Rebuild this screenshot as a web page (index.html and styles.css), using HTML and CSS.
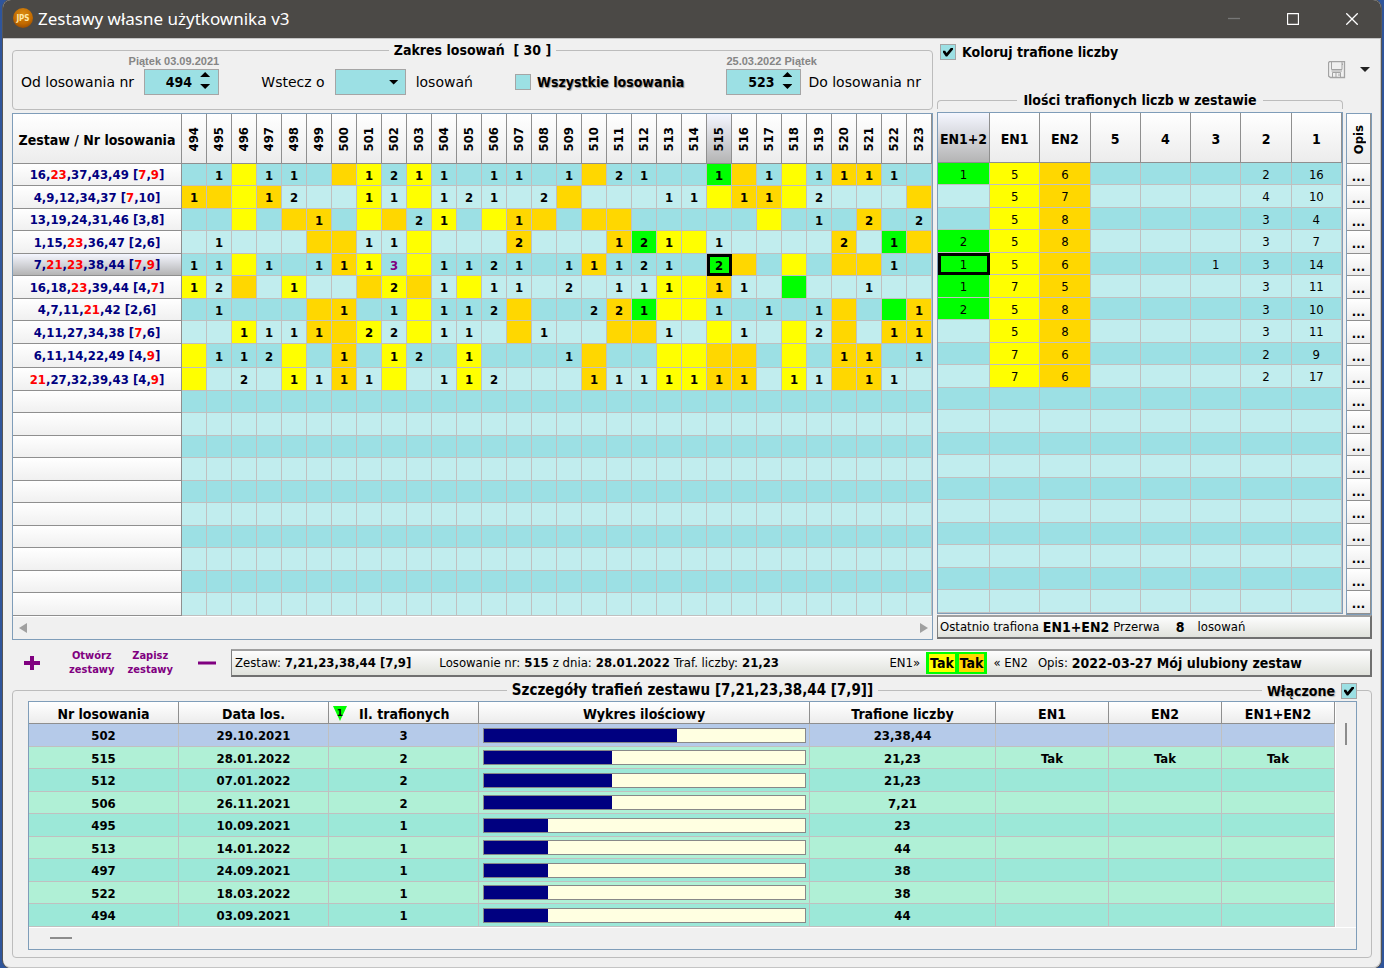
FILE: index.html
```html
<!DOCTYPE html>
<html lang="pl">
<head>
<meta charset="utf-8">
<title>Zestawy własne użytkownika v3</title>
<link rel="stylesheet" href="styles.css">
</head>
<body>
<div class="window">
  <header class="titlebar">
    <svg class="app-icon" viewBox="0 0 20 20" aria-hidden="true">
      <defs><radialGradient id="orb" cx="0.5" cy="0.3" r="0.8"><stop offset="0" stop-color="#d98a10"/><stop offset="0.6" stop-color="#c26a00"/><stop offset="1" stop-color="#8a4200"/></radialGradient></defs>
      <circle cx="10" cy="10" r="10" fill="url(#orb)"/>
      <text x="10" y="13" text-anchor="middle" class="app-icon-text">JPS</text>
    </svg>
    <h1 class="title">Zestawy własne użytkownika v3</h1>
    <div class="window-buttons">
      <button type="button" class="wbtn dim" aria-label="Minimalizuj"><svg width="12" height="12" viewBox="0 0 12 12"><path d="M0 5.5H12"/></svg></button>
      <button type="button" class="wbtn" aria-label="Maksymalizuj"><svg width="12" height="12" viewBox="0 0 12 12"><rect x="0.5" y="0.5" width="11" height="11" rx="0.5"/></svg></button>
      <button type="button" class="wbtn" aria-label="Zamknij"><svg width="12" height="12" viewBox="0 0 12 12"><path d="M0.3 0.3L11.7 11.7M11.7 0.3L0.3 11.7"/></svg></button>
    </div>
  </header>

  <main class="content">
    <div class="upper">
      <section class="left">
        <fieldset class="group range">
          <legend>Zakres losowań &nbsp;[ 30 ]</legend>
          <div class="range-row">
            <div class="field">
              <label class="wide-label" for="from">Od losowania nr</label>
              <div class="dated end">
                <span class="date">Piątek 03.09.2021</span>
                <div class="spin"><input id="from" type="text" value="494"><div class="arrows"><button type="button" class="up" aria-label="Więcej"></button><button type="button" class="down" aria-label="Mniej"></button></div></div>
              </div>
            </div>
            <div class="field">
              <label class="wide-label" for="back">Wstecz o</label>
              <div class="select"><select id="back"><option></option></select></div>
              <span class="wide-label">losowań</span>
            </div>
            <div class="field tick">
              <input type="checkbox" id="all"><label class="shadow" for="all">Wszystkie losowania</label>
            </div>
            <div class="field tight">
              <div class="dated">
                <span class="date">25.03.2022 Piątek</span>
                <div class="spin"><input id="to" type="text" value="523"><div class="arrows"><button type="button" class="up" aria-label="Więcej"></button><button type="button" class="down" aria-label="Mniej"></button></div></div>
              </div>
              <label class="wide-label" for="to">Do losowania nr</label>
            </div>
          </div>
        </fieldset>
        <div class="panel">
          <table class="grid draws">
            <thead><tr id="draws-head"><th class="first">Zestaw / Nr losowania</th></tr></thead>
            <tbody id="draws-body"></tbody>
          </table>
          <div class="hscroll"><button type="button" class="prev" aria-label="W lewo"></button><button type="button" class="next" aria-label="W prawo"></button></div>
        </div>
      </section>

      <section class="right">
        <div class="options">
          <div class="field tick colour"><input type="checkbox" id="colour" checked><label for="colour">Koloruj trafione liczby</label></div>
          <div class="save">
            <button type="button" class="plain" aria-label="Zapisz plik"><svg width="18" height="18" viewBox="0 0 18 18" fill="none" stroke="#a3a3a3"><path d="M1.500.5H16.5V16.500H2.500L.5 15V2Z" stroke-width="1.300"/><path d="M3.500.5V8.500H14V.5M3.500 10H14M4.500 16.500V11.500H12.500V16.500M8 12V16M11 12.500V15M14.500 2.500V4"/></svg></button>
            <button type="button" class="plain" aria-label="Więcej opcji"><svg width="10" height="5" viewBox="0 0 10 5"><path d="M0 0H10L5 5Z" fill="#222"/></svg></button>
          </div>
        </div>
        <div class="caption"><span>Ilości trafionych liczb w zestawie</span></div>
        <div class="stats">
          <div class="panel">
            <table class="grid counts">
              <thead><tr><th class="first chosen">EN1+2</th><th>EN1</th><th>EN2</th><th>5</th><th>4</th><th>3</th><th>2</th><th>1</th></tr></thead>
              <tbody id="counts-body"></tbody>
            </table>
          </div>
          <table class="grid notes">
            <thead><tr><th><span class="turn">Opis</span></th></tr></thead>
            <tbody id="notes-body"></tbody>
          </table>
        </div>
        <div class="status last"><span>Ostatnio trafiona</span><b>EN1+EN2</b><span>Przerwa</span><b class="gap-count">8</b><span>losowań</span></div>
      </section>
    </div>

    <div class="toolbar">
      <div class="actions">
        <button type="button" class="plain" aria-label="Dodaj"><svg width="16" height="16" viewBox="0 0 16 16"><path d="M0 8H16M8 1V15" stroke="#800080" stroke-width="4"/></svg></button>
        <button type="button" class="plain word">Otwórz<br>zestawy</button>
        <button type="button" class="plain word">Zapisz<br>zestawy</button>
        <button type="button" class="plain" aria-label="Usuń"><svg width="18" height="16" viewBox="0 0 18 16"><path d="M0 8H18" stroke="#800080" stroke-width="3"/></svg></button>
      </div>
      <div class="status info">
        <div class="pair set"><span>Zestaw:</span><b class="num">7,21,23,38,44 [7,9]</b></div>
        <div class="pair"><span>Losowanie nr:</span><b class="num">515</b></div>
        <div class="pair"><span>z dnia:</span><b class="num">28.01.2022</b></div>
        <div class="pair hits"><span>Traf. liczby:</span><b class="num">21,23</b></div>
        <div class="pair en"><span>EN1»</span><span class="taks"><b class="y">Tak</b><b class="o">Tak</b></span><span>« EN2</span></div>
        <div class="pair"><span>Opis:</span><b>2022-03-27 Mój ulubiony zestaw</b></div>
      </div>
    </div>

    <fieldset class="group details">
      <legend>Szczegóły trafień zestawu [7,21,23,38,44 [7,9]]</legend>
      <div class="enabled"><label for="on">Włączone</label><input type="checkbox" id="on" checked></div>
      <div class="panel detail-panel">
        <div class="detail-main">
          <table class="grid hits-table">
            <colgroup><col class="c150"><col class="c150"><col class="c150"><col><col class="c186"><col class="c113"><col class="c113"><col class="c113"></colgroup>
            <thead><tr><th>Nr losowania</th><th>Data los.</th><th><div class="sorted"><svg width="14" height="15" viewBox="0 0 14 15" aria-hidden="true"><path d="M0 0H14L7 15Z" fill="#0f0"/><text x="7" y="10" text-anchor="middle" class="sort-no">1</text></svg><span>Il. trafionych</span></div></th><th>Wykres ilościowy</th><th>Trafione liczby</th><th>EN1</th><th>EN2</th><th>EN1+EN2</th></tr></thead>
            <tbody id="hits-body"></tbody>
          </table>
          <div class="vscroll"><div class="vthumb"></div></div>
        </div>
        <div class="hbar"><div class="hthumb"></div></div>
      </div>
    </fieldset>
  </main>
</div>
<script src="app.js"></script>
</body>
</html>
```
FILE: styles.css
```css
* { box-sizing: border-box; }

body {
  margin: 0;
  padding: 0 3px 1px;
  min-height: 100vh;
  background: #2f559b;
  color: #000;
  font: 13px/16px "DejaVu Sans Condensed", "Noto Sans", sans-serif;
}

button, input, select { font: inherit; color: inherit; margin: 0; padding: 0; }
button { border: 0; background: none; display: flex; align-items: center; justify-content: center; }
table { border-collapse: separate; border-spacing: 0; table-layout: fixed; width: 100%; }

.window {
  min-height: calc(100vh - 1px);
  display: flex;
  flex-direction: column;
  background: #f0f0f0;
  border-radius: 8px;
  box-shadow: 0 0 0 1px #555;
  overflow: hidden;
}

.titlebar { height: 38px; display: flex; align-items: center; background: #4b4946; color: #fff; padding-left: 10px; }
.app-icon { width: 20px; height: 20px; margin-bottom: 2px; }
.app-icon-text { font: bold 8px "DejaVu Sans Condensed", sans-serif; fill: #ffe9a8; }
.title { flex: 1; margin: 0 0 0 5px; font: 17px/24px "Noto Sans", sans-serif; }
.window-buttons { display: flex; }
.wbtn { width: 59px; height: 38px; }
.wbtn svg { fill: none; stroke: #fff; stroke-width: 1.3; }
.wbtn.dim svg { stroke: #777; }

.content { flex: 1; padding: 3px 8px 9px 9px; border: solid #c4c4c4; border-width: 1px 1px 1px 0; display: flex; flex-direction: column; border-radius: 0 0 8px 8px; }
.upper { display: grid; grid-template-columns: minmax(0, 1fr) 435px; gap: 4px; }
.left, .right { display: flex; flex-direction: column; min-width: 0; }

.group { margin: 0; padding: 0; min-width: 0; border: 1px solid #bcbcbc; border-radius: 4px; }
.group legend { margin: 0 auto; padding: 0 5px; font-size: 14px; font-weight: bold; }
.range { height: 68px; margin-bottom: 3px; }
.range-row { display: flex; justify-content: space-between; align-items: flex-end; padding: 0 11px 0 8px; height: 37px; }
.field { display: flex; align-items: center; gap: 10px; height: 26px; }
.field.tight { gap: 7px; }
.field.tick { gap: 6px; font-size: 14px; font-weight: bold; }
.wide-label { font-family: "DejaVu Sans", sans-serif; font-size: 14px; white-space: nowrap; }
.shadow { text-shadow: 1px 1px 1px #999; white-space: nowrap; }
.dated { width: 75px; height: 26px; display: flex; flex-direction: column; align-items: flex-start; justify-content: flex-end; }
.dated.end { align-items: flex-end; }
.date { font: bold 11px/15px "Liberation Sans", sans-serif; color: #858585; white-space: nowrap; }
.spin { width: 75px; height: 26px; flex: none; display: flex; border: 1px solid #a5a5a5; background: #9ce0e4; }
.spin input { width: 47px; border: 0; background: none; text-align: right; font-size: 14px; font-weight: bold; }
.arrows { flex: 1; display: flex; flex-direction: column; justify-content: space-between; align-items: center; padding: 2px 0 5px; }
.up, .down { width: 10px; height: 5px; background: #000; clip-path: polygon(50% 0, 100% 100%, 0 100%); }
.down { clip-path: polygon(0 0, 100% 0, 50% 100%); }
.select { display: flex; align-items: center; width: 71px; height: 26px; border: 1px solid #a5a5a5; background: #9ce0e4; padding-right: 6px; }
.select select { flex: 1; min-width: 0; height: 24px; appearance: none; border: 0; background: none; }
.select::after { content: ""; width: 10px; height: 5px; background: #000; clip-path: polygon(0 0, 100% 0, 50% 100%); }

input[type="checkbox"] { appearance: none; flex: none; width: 16px; height: 16px; border: 1px solid #a5a5a5; background: #9ce0e4; display: grid; place-items: center; }
input[type="checkbox"]:checked::after { content: ""; width: 10px; height: 9px; background: #000; clip-path: polygon(0 35%, 22% 35%, 36% 62%, 82% 0, 100% 0, 100% 22%, 42% 100%, 28% 100%, 0 55%); }

.panel { border: 1px solid #7f9db9; }
.grid th { border: solid #8f8f8f; border-width: 0 1px 1px 0; padding: 0; background: linear-gradient(#fff, #ececec); font-weight: bold; white-space: nowrap; }
.grid thead th { font-size: 14px; padding-top: 2px; }
.grid tbody th { padding-top: 1px; }
.grid td { border: solid #c0c0c0; border-width: 0 1px 1px 0; padding: 2px 0 0; text-align: center; line-height: 18px; white-space: nowrap; }
.draws thead th, .counts thead th { height: 50px; }
.draws .first { width: 169px; }
.counts .first { width: 52px; }
.draws tbody th { color: #000080; background: linear-gradient(#fff, #f0f0f0); }
.draws td { font-weight: bold; }
.grid tbody tr { height: 22px; }
.grid tbody tr:nth-child(even) { height: 23px; }
.draws tbody tr:nth-child(9) { height: 24px; }
.draws td, .counts td { background: #9ce0e4; }
.draws tr:nth-child(even) td, .counts tr:nth-child(even) td { background: #c1edee; }
.grid td.y, .grid tr:nth-child(even) td.y { background: #ff0; }
.grid td.o, .grid tr:nth-child(even) td.o { background: #ffd700; }
.grid td.g, .grid tr:nth-child(even) td.g { background: #0f0; }
.grid td.p { color: #800080; }
.grid td.selected { outline: 3px solid #000; outline-offset: -3px; }
.draws thead th.chosen, .counts thead th.chosen, .draws tbody th.chosen { background: linear-gradient(#f4f6ff, #b4b4b4); }
.red { color: #f00; }
.turn { writing-mode: vertical-rl; transform: rotate(180deg); font-size: 13px; line-height: 16px; vertical-align: middle; }

.hscroll { height: 23px; display: flex; align-items: center; justify-content: space-between; padding: 0 4px 0 6px; border-top: 1px solid #fff; }
.prev, .next { width: 8px; height: 10px; background: #a0a0a0; clip-path: polygon(0 50%, 100% 0, 100% 100%); }
.next { clip-path: polygon(0 0, 100% 50%, 0 100%); }

.options { display: flex; justify-content: space-between; height: 50px; padding-left: 3px; }
.colour { height: 20px; }
.save { display: flex; gap: 14px; align-items: center; padding: 5px 2px 0 0; }
.caption { display: flex; align-items: center; gap: 6px; width: 406px; height: 16px; font-size: 14px; font-weight: bold; }
.caption::before, .caption::after { content: ""; flex: 1; height: 8px; margin-top: 8px; border: solid #bcbcbc; border-width: 1px 0 0 1px; border-radius: 4px 0 0 0; }
.caption::after { border-width: 1px 1px 0 0; border-radius: 0 4px 0 0; }
.stats { display: flex; gap: 3px; align-items: flex-start; margin-top: 4px; }
.stats .panel { flex: 1; min-width: 0; }
.notes { width: 26px; border: 1px solid #7f9db9; margin-top: 1px; }
.notes thead th { height: 50px; }
.notes td { background: linear-gradient(#fff, #ececec); border-color: #8f8f8f; padding: 0; }
.more { width: 100%; height: 20px; font-weight: bold; padding-top: 4px; }

.status { display: flex; align-items: center; border: solid; border-color: #a0a0a0 #707070 #707070 #808080; border-width: 2px 2px 2px 1px; background: linear-gradient(#fdfdfd, #e0e2dc); white-space: nowrap; }
.status b { font-size: 14px; }
.status .num { font-size: 13px; }
.last { height: 24px; padding-left: 2px; gap: 4px; }
.gap-count { margin: 0 9px 0 12px; }
.toolbar { display: flex; align-items: center; margin-top: 9px; }
.actions { width: 219px; flex: none; display: flex; align-items: center; justify-content: space-between; padding: 0 15px 0 12px; }
.word { color: #800080; font: bold 11px/14px "DejaVu Sans Condensed", sans-serif; }
.word:nth-child(2) { margin-left: 16px; }
.word:nth-child(3) { margin-right: 12px; }
.info { flex: 1; height: 28px; padding: 0 68px 0 3px; gap: 4px; }
.pair { display: flex; align-items: center; gap: 4px; }
.set { margin-right: 24px; }
.hits { flex: 1; }
.en { gap: 6px; margin-right: 6px; }
.taks { display: flex; gap: 4px; padding: 2px 3px; background: #0f0; }
.taks b { line-height: 18px; padding: 0 1px; }
.taks .y { background: #ff0; }
.taks .o { background: #ffd700; }

.details { position: relative; margin-top: 4px; padding: 2px 14px 7px 15px; border-radius: 4px; }
.details legend { font-size: 15px; line-height: 18px; }
.enabled { position: absolute; top: -16px; right: 14px; display: flex; align-items: center; gap: 6px; padding: 0 0 0 5px; background: #f0f0f0; font-size: 14px; font-weight: bold; text-shadow: 1px 1px 1px #bbb; }
.detail-main { display: flex; }
.hits-table { flex: 1; }
.hits-table thead th { height: 22px; }
.c150 { width: 150px; }
.c186 { width: 186px; }
.c113 { width: 113px; }
.hits-table td { font-weight: bold; background: #9ce8d8; }
.hits-table tbody tr:nth-child(odd) { height: 23px; }
.hits-table tbody tr:nth-child(even) { height: 22px; }
.hits-table tr:nth-child(even) td { background: #b0f0d6; }
.hits-table tbody tr:first-child td { background: #b5cae9; }
.sorted { display: flex; align-items: center; gap: 12px; padding-left: 4px; }
.sort-no { font: bold 9px "DejaVu Sans", sans-serif; }
.grid td.chart { padding: 0 3px 0 4px; }
.bar { height: 15px; border: 1px solid #888; background: #ffffe1; }
.fill { height: 13px; background: #000080; }
.vscroll { width: 21px; flex: none; padding: 21px 9px 0; border-left: 1px solid #fff; }
.vthumb { height: 22px; width: 2px; background: #8c8c8c; }
.hbar { height: 22px; border-top: 1px solid #fff; padding: 9px 21px; }
.hthumb { width: 22px; height: 2px; background: #8c8c8c; }
```
FILE: app.js
```js
const sets = [
  ["16,*23,37,43,49 [*7,*9]", "- 1 y 1 1 - o y1 2 y1 1 - 1 1 - 1 o 2 1 - - g1 o 1 y 1 o1 o1 1 -", "g1 y5 o6 - - - 2 16"],
  ["4,9,12,34,37 [*7,10]", "o1 o y o1 2 - - y1 1 y 1 2 1 - 2 o - - - 1 1 y o1 o1 y 2 - - - o", "- y5 o7 - - - 4 10"],
  ["13,19,24,31,46 [3,8]", "- - y - o o1 - y o 2 y1 - y o1 o - o o - - - - - y - 1 - o2 - 2", "- y5 o8 - - - 3 4"],
  ["1,15,*23,36,47 [2,6]", "- 1 - - - o o 1 1 y - - - o2 - - - o1 g2 y1 y 1 - - - - o2 - g1 o", "g2 y5 o8 - - - 3 7"],
  ["7,*21,*23,38,44 [*7,*9]", "1 1 y 1 - 1 o1 y1 p3 y 1 1 2 1 - 1 o1 1 2 1 - g2! o - y - o o 1 -", "g1! y5 o6 - - 1 3 14"],
  ["16,18,*23,39,44 [4,*7]", "y1 2 o - y1 - - o y2 o 1 y 1 1 - 2 - 1 1 y1 y o1 1 - g - - 1 - -", "g1 y7 o5 - - - 3 11"],
  ["4,7,11,*21,42 [2,6]", "- 1 - - - o o1 - 1 y 1 1 2 o - - 2 o2 g1 y y 1 - 1 - 1 o - g o1", "g2 y5 o8 - - - 3 10"],
  ["4,11,27,34,38 [*7,6]", "- - y1 1 1 o1 o y2 2 y 1 1 - o 1 - - o o 1 - y 1 - y 2 o - o1 o1", "- y5 o8 - - - 3 11"],
  ["6,11,14,22,49 [4,*9]", "y 1 1 2 y - o1 - y1 2 - y1 - - - 1 o - - y y o o - y - o1 o1 - 1", "- y7 o6 - - - 2 9"],
  ["*21,27,32,39,43 [4,*9]", "y - 2 - y1 1 o1 1 y - 1 y1 2 - - - o1 1 1 y1 y1 o1 o1 - y1 1 o o1 1 -", "- y7 o6 - - - 2 17"]
];

const hits = [
  ["502", "29.10.2021", 3, "23,38,44", ""],
  ["515", "28.01.2022", 2, "21,23", "Tak"],
  ["512", "07.01.2022", 2, "21,23", ""],
  ["506", "26.11.2021", 2, "7,21", ""],
  ["495", "10.09.2021", 1, "23", ""],
  ["513", "14.01.2022", 1, "44", ""],
  ["497", "24.09.2021", 1, "38", ""],
  ["522", "18.03.2022", 1, "38", ""],
  ["494", "03.09.2021", 1, "44", ""]
];

const ROWS = 20;
const FIRST = 494;
const DRAWS = 30;

// A token is a colour letter, a count and "!" for the focused cell.
function cell(token) {
  const [, colour, value, focus] = token.match(/^([yogp]?)(\d*)(!?)/);
  return `<td class="${[colour, focus && "selected"].filter(Boolean).join(" ")}">${value}</td>`;
}

function cells(text, count) {
  return (text ? text.split(" ") : Array(count).fill("-")).map(cell).join("");
}

let head = "";
for (let i = 0; i < DRAWS; i++) {
  head += `<th class="${FIRST + i === 515 ? "chosen" : ""}"><span class="turn">${FIRST + i}</span></th>`;
}
document.getElementById("draws-head").insertAdjacentHTML("beforeend", head);

let draws = "", counts = "", notes = "";
for (let r = 0; r < ROWS; r++) {
  const [name, row, sum] = sets[r] || ["", "", ""];
  const label = name.replace(/\*(\d+)/g, '<span class="red">$1</span>');
  draws += `<tr><th class="${r === 4 ? "chosen" : ""}">${label}</th>${cells(row, DRAWS)}</tr>`;
  counts += `<tr>${cells(sum, 8)}</tr>`;
  notes += '<tr><td><button type="button" class="more">...</button></td></tr>';
}
document.getElementById("draws-body").innerHTML = draws;
document.getElementById("counts-body").innerHTML = counts;
document.getElementById("notes-body").innerHTML = notes;

document.getElementById("hits-body").innerHTML = hits.map(([no, date, n, nums, en]) =>
  `<tr><td>${no}</td><td>${date}</td><td>${n}</td><td class="chart"><div class="bar"><div class="fill" style="width:${n * 20}%"></div></div></td><td>${nums}</td><td>${en}</td><td>${en}</td><td>${en}</td></tr>`
).join("");
```
